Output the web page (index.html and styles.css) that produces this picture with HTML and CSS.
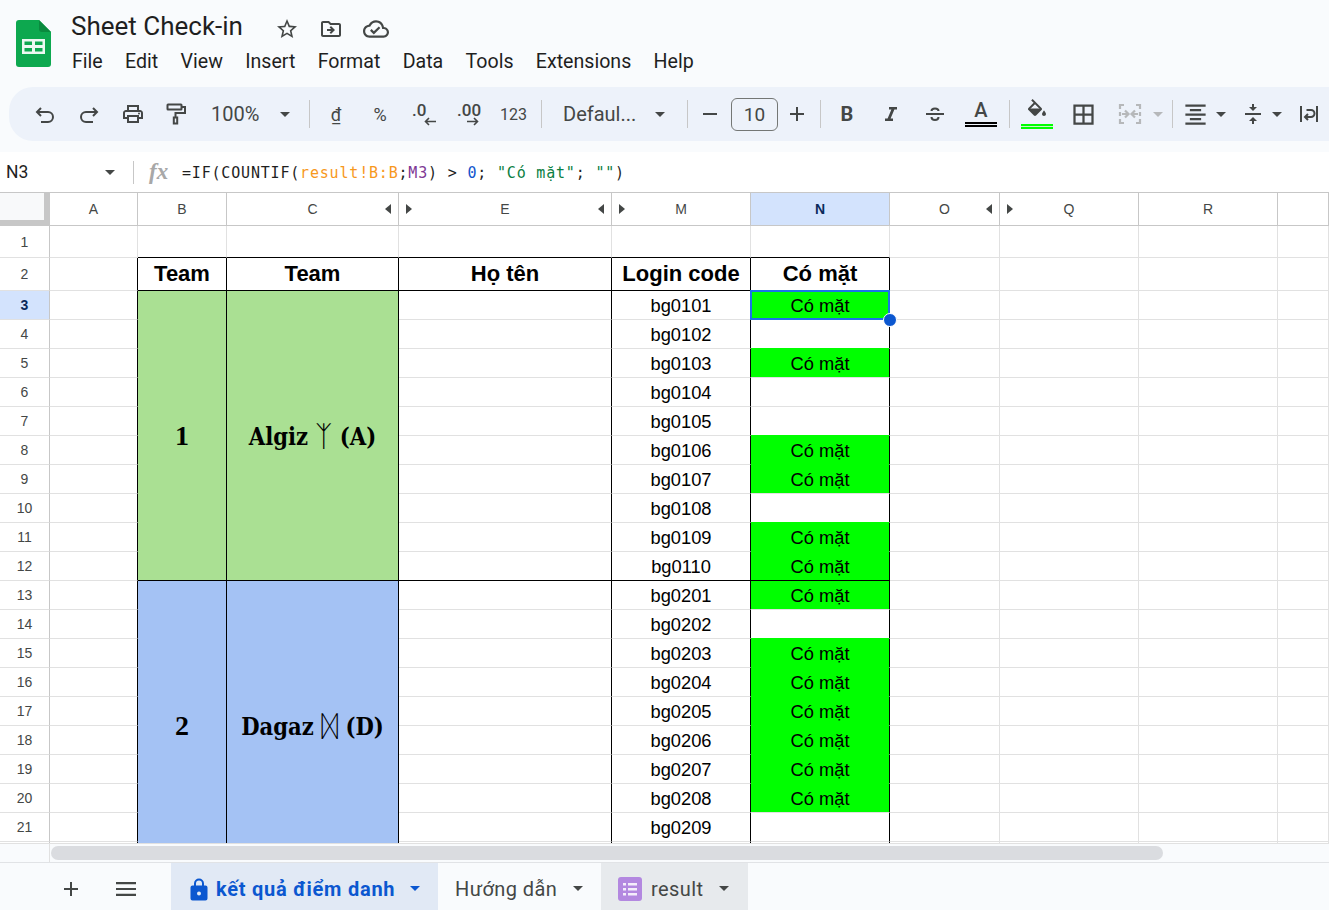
FILE: index.html
```html
<!DOCTYPE html>
<html lang="vi">
<head>
<meta charset="utf-8">
<title>Sheet Check-in</title>
<link rel="stylesheet" href="styles.css">
</head>
<body>
<header class="top">
  <svg class="logo" width="35" height="47" viewBox="0 0 35 47"><path fill="#0da84f" d="M3 0H23L35 12V44a3 3 0 0 1-3 3H3a3 3 0 0 1-3-3V3a3 3 0 0 1 3-3z"/><path fill="#0a8a3e" d="M23 0L35 12H26a3 3 0 0 1-3-3z"/><path fill="#fff" opacity=".92" d="M6 19H29V34H6zM8.500 21.500V25H16V21.500zM19 21.500V25H26.500V21.500zM8.500 28V31.500H16V28zM19 28V31.500H26.500V28z" fill-rule="evenodd"/></svg>
  <div class="doc">
    <div class="title-row">
      <span class="title">Sheet Check-in</span>
      <span class="title-icons">
        <svg width="24" height="24" viewBox="0 0 24 24"><path d="M22 9.240l-7.190-.62L12 2 9.190 8.630 2 9.240l5.460 4.730L5.820 21 12 17.270 18.180 21l-1.630-7.030L22 9.240zM12 15.400l-3.760 2.270 1-4.280-3.320-2.880 4.380-.38L12 6.100l1.710 4.040 4.380.38-3.320 2.880 1 4.280L12 15.400z"/></svg>
        <svg width="24" height="24" viewBox="0 0 24 24"><path d="M20 6h-8l-2-2H4c-1.100 0-2 .9-2 2v12c0 1.100.9 2 2 2h16c1.100 0 2-.9 2-2V8c0-1.100-.9-2-2-2zm0 12H4V6h5.170l2 2H20v10zm-8.010-9l-1.410 1.410L12.160 12H8v2h4.160l-1.590 1.590L11.990 17 16 13.010 11.990 9z"/></svg>
        <svg width="26" height="26" viewBox="0 0 24 24"><path d="M19.350 10.040C18.670 6.590 15.640 4 12 4 9.110 4 6.600 5.640 5.350 8.040 2.340 8.360 0 10.910 0 14c0 3.310 2.690 6 6 6h13c2.760 0 5-2.240 5-5 0-2.640-2.050-4.780-4.650-4.960zM19 18H6c-2.210 0-4-1.790-4-4 0-2.050 1.530-3.760 3.560-3.970l1.070-.11.5-.95C8.080 7.140 9.940 6 12 6c2.620 0 4.880 1.860 5.390 4.430l.3 1.500 1.530.11c1.560.1 2.780 1.410 2.780 2.960 0 1.650-1.350 3-3 3zm-9-3.820l-2.090-2.090L6.500 13.500 10 17l6.010-6.010-1.410-1.410z"/></svg>
      </span>
    </div>
    <nav class="menu"><span>File</span><span>Edit</span><span>View</span><span>Insert</span><span>Format</span><span>Data</span><span>Tools</span><span>Extensions</span><span>Help</span></nav>
  </div>
</header>

<div class="toolbar">
  <div class="tb"><svg class="line" width="24" height="24" viewBox="0 0 24 24"><path d="M8 6L4 10L8 14M4 10H15a5 5 0 0 1 0 10H8"/></svg></div>
  <div class="tb"><svg class="line" width="24" height="24" viewBox="0 0 24 24"><path d="M16 6L20 10L16 14M20 10H9a5 5 0 0 0 0 10H16"/></svg></div>
  <div class="tb"><svg width="24" height="24" viewBox="0 0 24 24"><path d="M19 8h-1V3H6v5H5c-1.660 0-3 1.340-3 3v6h4v4h12v-4h4v-6c0-1.660-1.340-3-3-3zM8 5h8v3H8V5zm8 12v2H8v-4h8v2zm2-2v-2H6v2H4v-4c0-.55.45-1 1-1h14c.55 0 1 .45 1 1v4h-2z"/><circle cx="18" cy="11.500" r="1"/></svg></div>
  <div class="tb tb-paint"><svg class="line" width="24" height="24" viewBox="0 0 24 24"><rect x="3.500" y="2.500" width="14" height="5" rx=".5"/><path d="M17.500 5H21V11H11.500V15"/><rect x="9.800" y="15.500" width="3.400" height="6"/></svg></div>
  <div class="tb tb-zoom"><span class="tb-text">100%</span><i class="caret"></i></div>
  <i class="sep"></i>
  <div class="tb"><span class="dong">₫</span></div>
  <div class="tb"><span class="tb-sym">%</span></div>
  <div class="tb"><span class="dec dec-1"><span>.0</span><svg class="line thin" width="12" height="9" viewBox="0 0 12 9"><path d="M5 1L1.500 4.500L5 8M1.500 4.500H12"/></svg></span></div>
  <div class="tb"><span class="dec dec-2"><span>.00</span><svg class="line thin" width="12" height="9" viewBox="0 0 12 9"><path d="M7 1L10.500 4.500L7 8M10.500 4.500H0"/></svg></span></div>
  <div class="tb tb-num"><span class="num">123</span></div>
  <i class="sep"></i>
  <div class="tb tb-font"><span class="tb-text">Defaul...</span><i class="caret"></i></div>
  <i class="sep"></i>
  <div class="tb tb-minus"><svg width="24" height="24" viewBox="0 0 24 24"><path d="M5 11h14v2H5z"/></svg></div>
  <div class="size">10</div>
  <div class="tb tb-plus"><svg width="24" height="24" viewBox="0 0 24 24"><path d="M5 11h6V5h2v6h6v2h-6v6h-2v-6H5z"/></svg></div>
  <i class="sep"></i>
  <div class="tb"><span class="bold">B</span></div>
  <div class="tb"><svg width="24" height="24" viewBox="0 0 24 24"><path d="M10 5v2.500h2.400L8.600 16.500H6V19h8v-2.500h-2.400l3.800-9H18V5z"/></svg></div>
  <div class="tb"><svg class="line" width="24" height="24" viewBox="0 0 24 24"><path d="M3 12H21M8.500 9C8.500 5.500 15.500 5.500 15.500 9M8.500 15C8.500 19 15.500 19 15.500 15"/></svg></div>
  <div class="tb tb-color"><span class="color-a">A</span><i class="bar bar-black"></i></div>
  <i class="sep"></i>
  <div class="tb tb-fill"><svg width="24" height="24" viewBox="0 0 24 24"><path d="M16.560 8.940L7.620 0 6.210 1.410l2.380 2.380-5.150 5.150c-.59.59-.59 1.540 0 2.120l5.500 5.500c.29.29.68.44 1.060.44s.77-.15 1.060-.44l5.500-5.500c.59-.58.59-1.530 0-2.120zM5.210 10L10 5.210 14.790 10H5.210zM19 11.500s-2 2.170-2 3.500c0 1.100.9 2 2 2s2-.9 2-2c0-1.330-2-3.500-2-3.500z"/><path d="M4 9.500h12l-6 6z"/></svg><i class="bar bar-lime"></i></div>
  <div class="tb tb-fill"><svg width="27" height="27" viewBox="0 0 24 24"><path d="M3 3v18h18V3H3zm8 16H5v-6h6v6zm0-8H5V5h6v6zm8 8h-6v-6h6v6zm0-8h-6V5h6v6z"/></svg></div>
  <div class="tb tb-merge"><svg class="line off" width="24" height="24" viewBox="0 0 24 24"><path d="M6 3H2V7M2 10V14M2 17V21H6M18 3H22V7M22 10V14M22 17V21H18M4 12H10M7 8.500L10.500 12L7 15.500M20 12H14M17 8.500L13.500 12L17 15.500" stroke-width="2.200"/></svg><i class="caret caret-off"></i></div>
  <i class="sep"></i>
  <div class="tb tb-align"><svg width="27" height="27" viewBox="0 0 24 24"><path d="M7 15v2h10v-2H7zm-4 6h18v-2H3v2zm0-8h18v-2H3v2zm4-6v2h10V7H7zM3 3v2h18V3H3z"/></svg><i class="caret"></i></div>
  <div class="tb tb-valign"><svg width="24" height="24" viewBox="0 0 24 24"><path d="M8 19h3v3h2v-3h3l-4-4-4 4zm8-14h-3V2h-2v3H8l4 4 4-4zM4 11v2h16v-2H4z"/></svg><i class="caret"></i></div>
  <div class="tb"><svg class="line" width="24" height="24" viewBox="0 0 24 24"><path d="M4 4V20M20 4V20M9.500 8H14a3.500 3.500 0 0 1 0 7H8M11 12L8 15L11 18"/></svg></div>
</div>

<div class="formula">
  <span class="name">N3</span><i class="caret"></i><i class="fsep"></i>
  <span class="fx">fx</span>
  <span class="ftext">=IF(COUNTIF(<span class="f-ref">result!B:B</span>;<span class="f-ref2">M3</span>) &gt; <span class="f-num">0</span>; <span class="f-str">"Có mặt"</span>; <span class="f-str">""</span>)</span>
</div>

<div class="grid-wrap">
<table class="grid">
<colgroup><col class="c-h"><col class="c-a"><col class="c-b"><col class="c-c"><col class="c-e"><col class="c-m"><col class="c-m"><col class="c-o"><col class="c-m"><col class="c-m"><col class="c-s"></colgroup>
<thead>
<tr><th class="corner"></th><th>A</th><th>B</th><th class="hid-l">C<i class="tri-l"></i></th><th class="hid-l">E<i class="tri-r-in"></i><i class="tri-l"></i></th><th class="hid-l">M<i class="tri-r-in"></i></th><th class="sel-h">N</th><th class="hid-l">O<i class="tri-l"></i></th><th class="hid-l">Q<i class="tri-r-in"></i></th><th>R</th><th></th></tr>
</thead>
<tbody>
<tr class="r1"><td class="rh">1</td><td></td><td class="kb"></td><td class="kb"></td><td class="kb"></td><td class="kb"></td><td class="kb"></td><td></td><td></td><td></td><td></td></tr>
<tr class="r2"><td class="rh">2</td><td class="kr"></td><td class="hd kr kb">Team</td><td class="hd kr kb">Team</td><td class="hd kr kb">Họ tên</td><td class="hd kr kb">Login code</td><td class="hd kr kb">Có mặt</td><td></td><td></td><td></td><td></td></tr>
<tr><td class="rh rh-sel">3</td><td class="kr"></td><td class="team green kr kb" rowspan="10">1</td><td class="name-cell green kr kb" rowspan="10">Algiz <span class="rune">ᛉ</span> (A)</td><td class="kr"></td><td class="kr">bg0101</td><td class="on flush kr active">Có mặt<i class="handle"></i></td><td></td><td></td><td></td><td></td></tr>
<tr><td class="rh">4</td><td class="kr"></td><td class="kr"></td><td class="kr">bg0102</td><td class="kr"></td><td></td><td></td><td></td><td></td></tr>
<tr><td class="rh">5</td><td class="kr"></td><td class="kr"></td><td class="kr">bg0103</td><td class="on kr">Có mặt</td><td></td><td></td><td></td><td></td></tr>
<tr><td class="rh">6</td><td class="kr"></td><td class="kr"></td><td class="kr">bg0104</td><td class="kr"></td><td></td><td></td><td></td><td></td></tr>
<tr><td class="rh">7</td><td class="kr"></td><td class="kr"></td><td class="kr">bg0105</td><td class="kr"></td><td></td><td></td><td></td><td></td></tr>
<tr><td class="rh">8</td><td class="kr"></td><td class="kr"></td><td class="kr">bg0106</td><td class="on kr">Có mặt</td><td></td><td></td><td></td><td></td></tr>
<tr><td class="rh">9</td><td class="kr"></td><td class="kr"></td><td class="kr">bg0107</td><td class="on kr">Có mặt</td><td></td><td></td><td></td><td></td></tr>
<tr><td class="rh">10</td><td class="kr"></td><td class="kr"></td><td class="kr">bg0108</td><td class="kr"></td><td></td><td></td><td></td><td></td></tr>
<tr><td class="rh">11</td><td class="kr"></td><td class="kr"></td><td class="kr">bg0109</td><td class="on kr">Có mặt</td><td></td><td></td><td></td><td></td></tr>
<tr><td class="rh">12</td><td class="kr"></td><td class="kr kb"></td><td class="kr kb">bg0110</td><td class="on kr kb">Có mặt</td><td></td><td></td><td></td><td></td></tr>
<tr><td class="rh">13</td><td class="kr"></td><td class="team blue kr" rowspan="10">2</td><td class="name-cell blue kr" rowspan="10">Dagaz <span class="rune">ᛞ</span> (D)</td><td class="kr"></td><td class="kr">bg0201</td><td class="on flush kr">Có mặt</td><td></td><td></td><td></td><td></td></tr>
<tr><td class="rh">14</td><td class="kr"></td><td class="kr"></td><td class="kr">bg0202</td><td class="kr"></td><td></td><td></td><td></td><td></td></tr>
<tr><td class="rh">15</td><td class="kr"></td><td class="kr"></td><td class="kr">bg0203</td><td class="on kr">Có mặt</td><td></td><td></td><td></td><td></td></tr>
<tr><td class="rh">16</td><td class="kr"></td><td class="kr"></td><td class="kr">bg0204</td><td class="on kr">Có mặt</td><td></td><td></td><td></td><td></td></tr>
<tr><td class="rh">17</td><td class="kr"></td><td class="kr"></td><td class="kr">bg0205</td><td class="on kr">Có mặt</td><td></td><td></td><td></td><td></td></tr>
<tr><td class="rh">18</td><td class="kr"></td><td class="kr"></td><td class="kr">bg0206</td><td class="on kr">Có mặt</td><td></td><td></td><td></td><td></td></tr>
<tr><td class="rh">19</td><td class="kr"></td><td class="kr"></td><td class="kr">bg0207</td><td class="on kr">Có mặt</td><td></td><td></td><td></td><td></td></tr>
<tr><td class="rh">20</td><td class="kr"></td><td class="kr"></td><td class="kr">bg0208</td><td class="on kr">Có mặt</td><td></td><td></td><td></td><td></td></tr>
<tr><td class="rh">21</td><td class="kr"></td><td class="kr"></td><td class="kr">bg0209</td><td class="kr"></td><td></td><td></td><td></td><td></td></tr>
<tr><td class="rh"></td><td class="kr"></td><td class="kr"></td><td class="kr"></td><td class="kr"></td><td></td><td></td><td></td><td></td></tr>
</tbody>
</table>
</div>

<div class="hscroll"><div class="hs-corner"></div><div class="hs-track"><div class="hs-thumb"></div></div></div>

<footer class="tabs">
  <svg class="tab-add" width="24" height="24" viewBox="0 0 24 24"><path d="M5 11h6V5h2v6h6v2h-6v6h-2v-6H5z"/></svg>
  <svg class="tab-all" width="24" height="24" viewBox="0 0 24 24"><path d="M2 5h20v2.200H2zM2 10.900h20v2.200H2zM2 16.800h20v2.200H2z"/></svg>
  <div class="tab tab-active">
    <svg width="18" height="24" viewBox="0 0 18 24"><path d="M15.500 8.500H14V6.500a5 5 0 0 0-10 0v2H2.500A2 2 0 0 0 .5 10.500V21.500a2 2 0 0 0 2 2h13a2 2 0 0 0 2-2V10.500a2 2 0 0 0-2-2zM6 6.500a3 3 0 0 1 6 0v2H6zM9 18.500a2 2 0 1 1 0-4 2 2 0 0 1 0 4z"/></svg>
    <span>kết quả điểm danh</span><i class="caret"></i>
  </div>
  <div class="tab tab-plain"><span>Hướng dẫn</span><i class="caret"></i></div>
  <div class="tab tab-form">
    <svg width="24" height="24" viewBox="0 0 24 24"><rect width="24" height="24" rx="3" fill="#b388e0"/><path fill="#fff" opacity=".85" d="M5 6h3v2.500H5zM10 6h9v2.500h-9zM5 11h3v2.500H5zM10 11h9v2.500h-9zM5 16h3v2.500H5zM10 16h9v2.500h-9z"/></svg>
    <span>result</span><i class="caret"></i>
  </div>
</footer>
</body>
</html>
```
FILE: styles.css
```css
* { box-sizing: border-box; }
html, body { margin: 0; padding: 0; }
body {
  width: 1329px; height: 910px; overflow: hidden;
  background: #f9fbfd; color: #1f1f1f;
  font-family: Roboto, "Liberation Sans", sans-serif;
}
i { font-style: normal; display: block; flex: none; }
svg { display: block; flex: none; fill: #444746; }
svg.line { fill: none; stroke: #444746; stroke-width: 2; }
svg.thin { stroke-width: 1.6; }
svg.off { stroke: #b6b8ba; }

.caret { width: 0; height: 0; border-left: 5px solid transparent; border-right: 5px solid transparent; border-top: 5px solid #444746; }
.caret-off { border-top-color: #b6b8ba; }

/* top */
.top { height: 87px; display: flex; padding: 20px 0 0 16px; }
.doc { margin-left: 20px; margin-top: -10px; }
.title-row { display: flex; align-items: center; height: 32px; }
.title { font-size: 26px; color: #1f1f1f; width: 204px; }
.title-icons { display: flex; align-items: center; gap: 20px; margin-top: 5px; }
.menu { display: flex; gap: 22.300px; font-size: 19.600px; color: #1f1f1f; margin-top: 8px; margin-left: 1px; line-height: 24px; }

/* toolbar */
.toolbar { height: 54px; margin: 0 0 11px 9px; padding-left: 14px; width: 1340px; background: #edf2fa; border-radius: 24px 0 0 24px; display: flex; align-items: center; overflow: hidden; }
.tb { width: 44px; height: 40px; flex: none; display: flex; align-items: center; justify-content: center; color: #444746; position: relative; }
.tb-paint svg { margin-left: -3px; }
.sep { width: 1px; height: 28px; background: #c7c7c7; margin: 0 4px; }
.tb-zoom { width: 106px; justify-content: flex-start; padding-left: 12px; }
.tb-zoom .caret { margin-left: 21px; }
.tb-text { font-size: 20px; color: #444746; }
.dong { font-size: 18px; }
.tb-sym { font-size: 18px; }
.dec { display: flex; flex-direction: column; font-size: 17px; font-weight: 500; line-height: 14px; margin-top: 1px; }
.dec svg { align-self: flex-end; }
.dec-1 { width: 24px; }
.dec-2 { width: 22px; }
.tb-num { width: 47px; }
.num { font-size: 16px; }
.tb-font { width: 137px; justify-content: flex-start; padding-left: 17px; }
.tb-font .caret { margin-left: 19px; }
.tb-minus { width: 36px; }
.size { width: 47px; height: 33px; margin-left: 3px; border: 1px solid #747775; border-radius: 6px; display: flex; align-items: center; justify-content: center; font-size: 19px; color: #444746; }
.tb-plus { width: 38px; }
.bold { font-size: 20px; font-weight: 700; }
.tb-color { width: 48px; flex-direction: column; }
.color-a { font-size: 20px; font-weight: 500; line-height: 20px; margin-top: -2px; }
.bar { width: 32px; height: 5px; margin-top: 2px; background: #edf2fa; }
.bar-black { border-top: 2px solid #000; border-bottom: 2px solid #000; background: #f0f4fa; }
.tb-fill { width: 46px; flex-direction: column; }
.bar-lime { border-top: 2px solid #00ff00; border-bottom: 2px solid #00ff00; background: #c9f5c9; margin-top: 1px; }
.tb-merge { width: 62px; justify-content: flex-start; padding-left: 12px; }
.tb-merge .caret { margin-left: 11px; }
.tb-align { width: 54px; justify-content: flex-start; padding-left: 5px; }
.tb-align .caret { margin-left: 7px; }
.tb-valign { width: 56px; justify-content: flex-start; padding-left: 10px; }
.tb-valign .caret { margin-left: 7px; }

/* formula */
.formula { height: 40px; background: #fff; display: flex; align-items: center; padding-left: 6px; }
.name { font-size: 17.500px; width: 99px; color: #1f1f1f; }
.fsep { width: 1px; height: 23px; background: #c7c7c7; margin-left: 18px; }
.fx { font: italic 700 23px "Liberation Serif", serif; color: #a8a8a8; margin-left: 15px; width: 33px; }
.ftext { font: 15px "DejaVu Sans Mono", monospace; letter-spacing: .81px; color: #1f1f1f; white-space: pre; padding-top: 1px; }
.f-ref { color: #f7981d; }
.f-ref2 { color: #7e3794; }
.f-num { color: #1155cc; }
.f-str { color: #0b8043; }

/* grid */
.grid-wrap { height: 651px; overflow: hidden; background: #fff; border-top: 1px solid #c7c7c7; }
.grid { border-collapse: separate; border-spacing: 0; table-layout: fixed; width: 1329px; font-family: "Liberation Sans", Arial, sans-serif; }
.c-h { width: 50px; } .c-a { width: 88px; } .c-b { width: 89px; } .c-c { width: 172px; } .c-e { width: 213px; } .c-m { width: 139px; } .c-o { width: 110px; } .c-s { width: 51px; }
.grid th { height: 33px; padding: 0; font-weight: 400; font-size: 14px; color: #444746; background: #fff; border-right: 1px solid #c7c7c7; border-bottom: 1px solid #c7c7c7; position: relative; }
.grid th.corner { background: #f8f9fa; border-right: 6px solid #c7c7c7; border-bottom: 6px solid #c7c7c7; }
.grid th.sel-h { background: #d3e3fd; color: #0b2a5b; font-weight: 700; }
.grid td { height: 29px; padding: 2px 0 0; text-align: center; font-size: 18.300px; line-height: 1; color: #000; border-right: 1px solid #e1e1e1; border-bottom: 1px solid #e1e1e1; position: relative; white-space: nowrap; }
.grid .r1 td { height: 32px; }
.grid .r2 td { height: 33px; }
.grid td.rh { padding: 0; font-size: 14px; color: #444746; background: #fff; border-right-color: #c7c7c7; }
.grid td.rh-sel { background: #d3e3fd; color: #0b2a5b; font-weight: 700; }
.grid td.kr { border-right-color: #000; }
.grid td.kb { border-bottom-color: #000; }
.grid td.hd { padding: 0; font-size: 22px; font-weight: 700; }
.grid td.green { background: #aae093; }
.grid td.blue { background: #a4c2f4; }
.grid td.on { background: #00ff00; }
.grid td.on::before { content: ""; position: absolute; left: 0; right: 0; top: -1px; height: 1px; background: #00ff00; }
.grid td.flush::before { display: none; }
.grid td.team { padding: 0; font: 700 28px "Liberation Serif", serif; }
.grid td.name-cell { padding: 2px 0 0; font: 700 23.500px "DejaVu Serif Condensed", "Liberation Serif", serif; }
.rune { font: 400 29px "DejaVu Sans", sans-serif; line-height: 1; vertical-align: -1px; }
.grid td.active::after { content: ""; position: absolute; inset: -1px; border: 2px solid #1a73e8; }
.handle { position: absolute; right: -8px; bottom: -8px; width: 14px; height: 14px; border-radius: 50%; background: #0b57d0; border: 1px solid #fff; z-index: 2; }
.tri-l { position: absolute; right: 7px; top: 11px; border-top: 5px solid transparent; border-bottom: 5px solid transparent; border-right: 6px solid #444746; }
.tri-r-in { position: absolute; left: 7px; top: 11px; border-top: 5px solid transparent; border-bottom: 5px solid transparent; border-left: 6px solid #444746; }

/* scrollbar */
.hscroll { height: 20px; display: flex; background: #f9fbfd; border-bottom: 1px solid #e1e3e6; border-top: 1px solid #e1e1e1; }
.hs-corner { width: 50px; border-right: 1px solid #e1e1e1; }
.hs-track { flex: 1; padding: 2px 0 0 1px; }
.hs-thumb { width: 1112px; height: 14px; border-radius: 7px; background: #dadce0; }

/* tabs */
.tabs { height: 47px; display: flex; align-items: center; background: #f9fbfd; padding-left: 59px; }
.tab-add { margin: 4px 31px 0 0; }
.tab-all { margin: 4px 33px 0 0; }
.tab { height: 47px; padding-top: 4px; display: flex; align-items: center; font-size: 20px; letter-spacing: .4px; color: #444746; flex: none; }
.tab .caret { margin-left: 16px; }
.tab-active { width: 267px; background: #e1e9f5; color: #0b57d0; font-weight: 700; letter-spacing: .75px; padding-left: 19px; gap: 8px; }
.tab-active svg { fill: #0b57d0; }
.tab-active .caret { border-top-color: #0b57d0; margin-left: 7px; }
.tab-plain { width: 163px; padding-left: 17px; }
.tab-form { width: 147px; background: #e7eaed; padding-left: 17px; gap: 9px; }
.tab-form .caret { margin-left: 7px; }
```
